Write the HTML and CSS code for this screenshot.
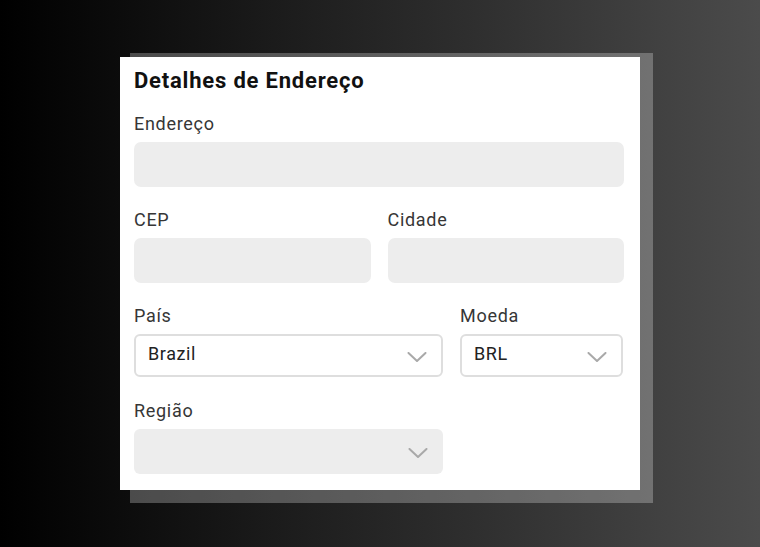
FILE: index.html
```html
<!DOCTYPE html>
<html lang="pt">
<head>
<meta charset="utf-8">
<title>Detalhes de Endereço</title>
<link rel="stylesheet" href="styles.css">
</head>
<body>
<div class="stage">
  <div class="card-wrap">
    <form class="card">
      <h2 class="title">Detalhes de Endereço</h2>
      <div class="field">
        <label class="label">Endereço</label>
        <div class="input"></div>
      </div>
      <div class="row row-half">
        <div class="field">
          <label class="label">CEP</label>
          <div class="input"></div>
        </div>
        <div class="field">
          <label class="label">Cidade</label>
          <div class="input"></div>
        </div>
      </div>
      <div class="row row-wide">
        <div class="field">
          <label class="label">País</label>
          <div class="select"><span class="value">Brazil</span>
            <svg class="chev" viewBox="0 0 20 10" width="20" height="10"><path d="M1.5 1 L10 9 L18.5 1" fill="none" stroke="#a9a9a9" stroke-width="2" stroke-linecap="round" stroke-linejoin="round"/></svg>
          </div>
        </div>
        <div class="field">
          <label class="label">Moeda</label>
          <div class="select"><span class="value">BRL</span>
            <svg class="chev" viewBox="0 0 20 10" width="20" height="10"><path d="M1.5 1 L10 9 L18.5 1" fill="none" stroke="#a9a9a9" stroke-width="2" stroke-linecap="round" stroke-linejoin="round"/></svg>
          </div>
        </div>
      </div>
      <div class="row row-wide row-last">
        <div class="field">
          <label class="label">Região</label>
          <div class="select disabled"><span class="value"></span>
            <svg class="chev" viewBox="0 0 20 10" width="20" height="10"><path d="M1.5 1 L10 9 L18.5 1" fill="none" stroke="#a9a9a9" stroke-width="2" stroke-linecap="round" stroke-linejoin="round"/></svg>
          </div>
        </div>
      </div>
    </form>
  </div>
</div>
</body>
</html>
```

FILE: styles.css
```css
* { box-sizing: border-box; }
html, body { margin: 0; padding: 0; }
body {
  width: 760px;
  height: 547px;
  background: linear-gradient(to right, #000 0%, #4b4b4b 100%);
  font-family: Roboto, "Liberation Sans", sans-serif;
  overflow: hidden;
}
.stage {
  padding: 57px 0 0 120px;
}
.card-wrap {
  position: relative;
  width: 520px;
}
.card-wrap::before {
  content: "";
  position: absolute;
  left: 10px;
  top: -4px;
  right: -13px;
  bottom: -13px;
  background: rgba(255, 255, 255, 0.26);
}
.card {
  position: relative;
  background: #fff;
  height: 433px;
  padding: 11px 16px 0 14px;
}
.title {
  margin: 0;
  font-size: 22px;
  line-height: 26px;
  font-weight: 700;
  color: #111;
  letter-spacing: 0.8px;
}
.field {
  display: flex;
  flex-direction: column;
}
.card > .field { margin-top: 19px; }
.label {
  font-size: 18px;
  line-height: 21px;
  color: #363636;
  letter-spacing: 0.7px;
  margin-bottom: 8px;
}
.input {
  height: 45px;
  background: #ededed;
  border-radius: 7px;
}
.row {
  display: grid;
  margin-top: 22px;
}
.row-half {
  grid-template-columns: 1fr 1fr;
  gap: 17px;
}
.row-wide {
  grid-template-columns: 309px 163px;
  gap: 17px;
}
.row-last { margin-top: 23px; }
.select {
  height: 43px;
  border: 2px solid #dedede;
  border-radius: 6px;
  display: flex;
  align-items: center;
  justify-content: space-between;
  padding: 0 14px 0 12px;
  background: #fff;
}
.select.disabled {
  border: none;
  height: 45px;
  background: #ededed;
  padding: 0 15px 0 14px;
}
.value {
  font-size: 18px;
  color: #222;
  line-height: 20px;
  letter-spacing: 0.6px;
  margin-top: -4px;
}
.chev { display: block; margin-top: 2px; }
```
